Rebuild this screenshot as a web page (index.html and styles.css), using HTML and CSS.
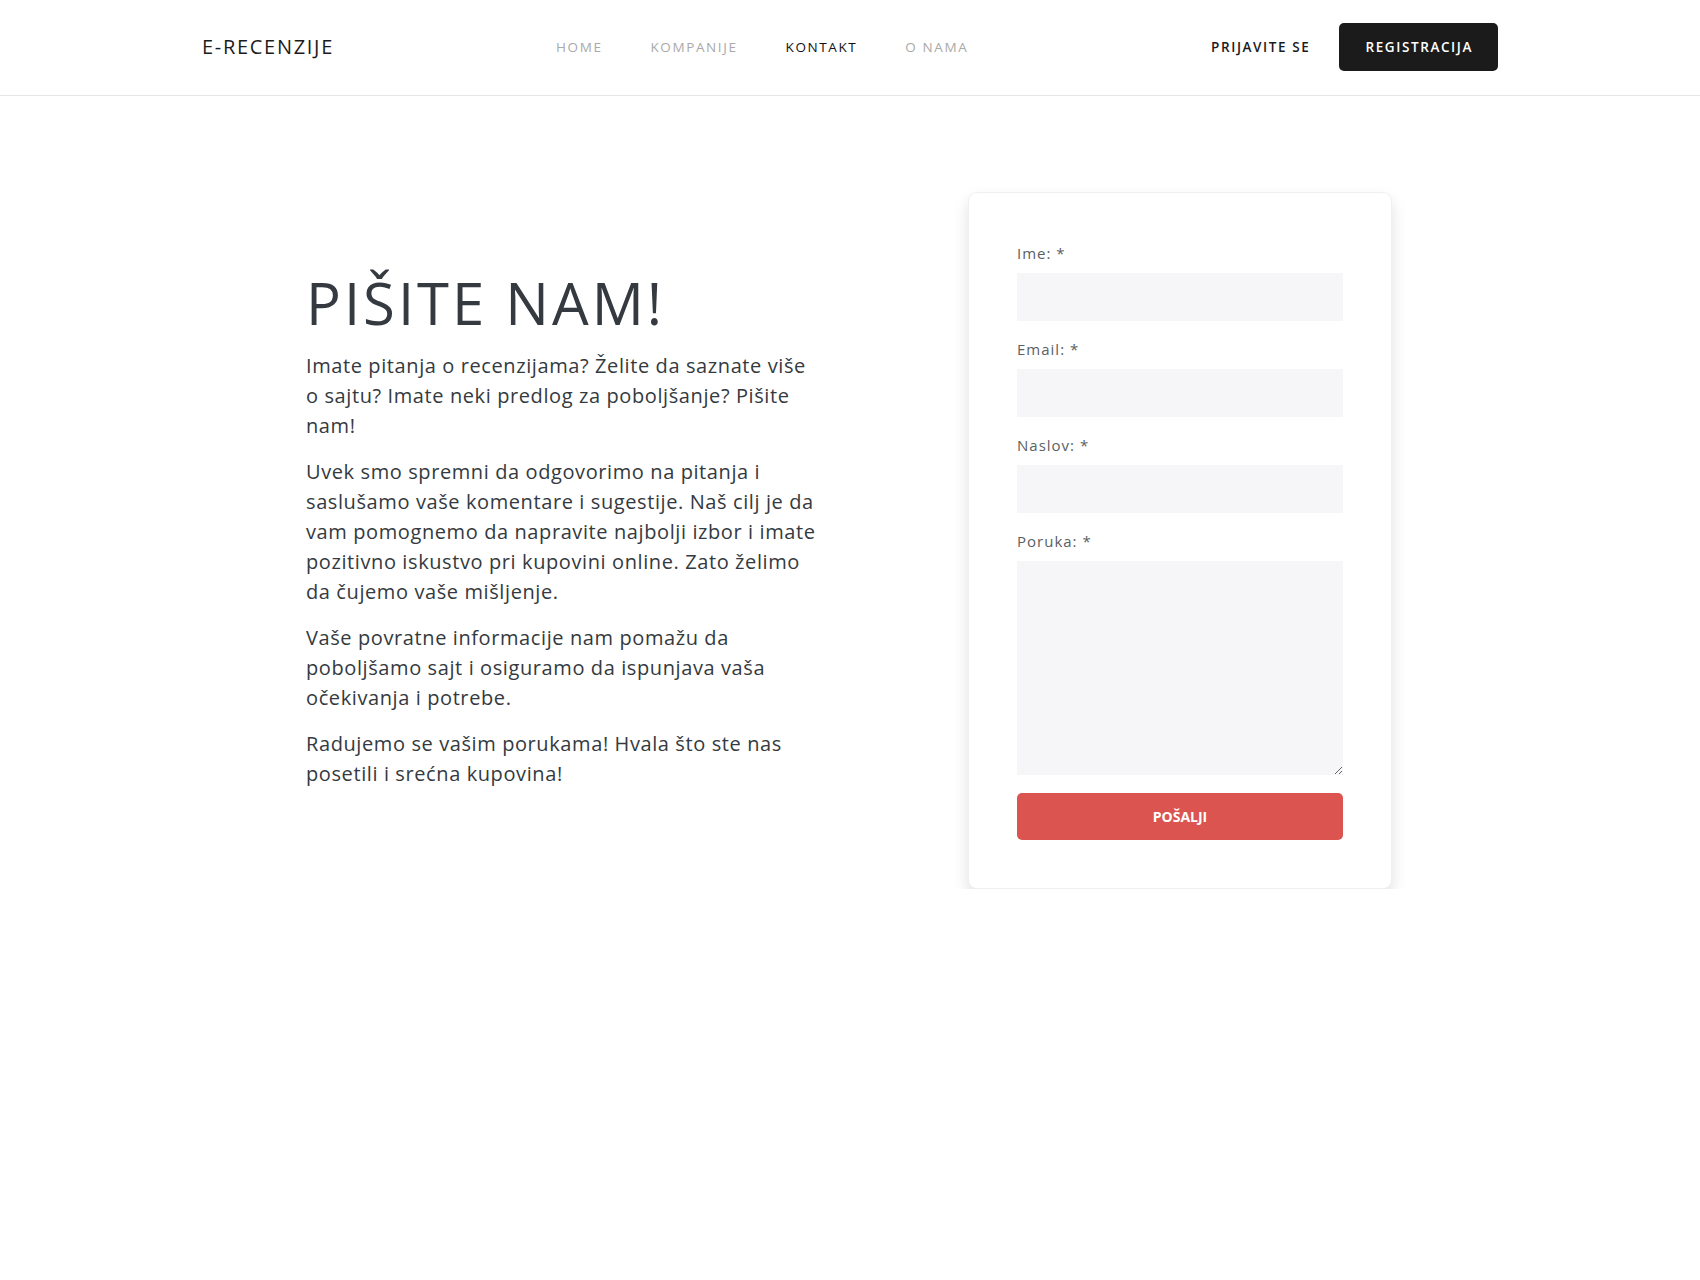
FILE: index.html
```html
<!DOCTYPE html>
<html lang="sr">
<head>
<meta charset="utf-8">
<title>E-Recenzije - Kontakt</title>
<link rel="stylesheet" href="styles.css">
</head>
<body>
<header class="site-header">
  <div class="container header-inner">
    <a class="logo" href="#">E-RECENZIJE</a>
    <nav class="main-nav">
      <a class="nav-link" href="#">HOME</a>
      <a class="nav-link" href="#">KOMPANIJE</a>
      <a class="nav-link active" href="#">KONTAKT</a>
      <a class="nav-link" href="#">O NAMA</a>
    </nav>
    <div class="auth">
      <a class="login" href="#">PRIJAVITE SE</a>
      <a class="register" href="#">REGISTRACIJA</a>
    </div>
  </div>
</header>
<main class="container contact">
  <section class="intro">
    <h1 class="title">PIŠITE NAM!</h1>
    <p class="lead">Imate pitanja o recenzijama? Želite da saznate više o sajtu? Imate neki predlog za poboljšanje? Pišite nam!</p>
    <p class="lead">Uvek smo spremni da odgovorimo na pitanja i saslušamo vaše komentare i sugestije. Naš cilj je da vam pomognemo da napravite najbolji izbor i imate pozitivno iskustvo pri kupovini online. Zato želimo da čujemo vaše mišljenje.</p>
    <p class="lead">Vaše povratne informacije nam pomažu da poboljšamo sajt i osiguramo da ispunjava vaša očekivanja i potrebe.</p>
    <p class="lead">Radujemo se vašim porukama! Hvala što ste nas posetili i srećna kupovina!</p>
  </section>
  <form class="card">
    <div class="field">
      <label for="ime">Ime: *</label>
      <input id="ime" type="text">
    </div>
    <div class="field">
      <label for="email">Email: *</label>
      <input id="email" type="email">
    </div>
    <div class="field">
      <label for="naslov">Naslov: *</label>
      <input id="naslov" type="text">
    </div>
    <div class="field">
      <label for="poruka">Poruka: *</label>
      <textarea id="poruka"></textarea>
    </div>
    <button class="send" type="button">POŠALJI</button>
  </form>
</main>
</body>
</html>
```
FILE: styles.css
```css
* { box-sizing: border-box; }
body {
  margin: 0;
  font-family: "Open Sans", "Noto Sans", sans-serif;
  color: #343a40;
  background: #fff;
}
a { text-decoration: none; }
.container {
  width: 1296px;
  margin: 0 auto;
}
.site-header {
  border-bottom: 1px solid #e6e6e6;
}
.header-inner {
  height: 95px;
  display: flex;
  align-items: center;
  padding-bottom: 2px;
}
.logo {
  font-size: 20px;
  letter-spacing: 1.7px;
  color: #1b1b1b;
  width: 132px;
  white-space: nowrap;
}
.main-nav {
  display: flex;
  gap: 48px;
  margin-left: 222px;
}
.nav-link {
  font-size: 13.5px;
  letter-spacing: 1.6px;
  color: #a9a9a9;
}
.nav-link.active { color: #111; }
.auth {
  margin-left: auto;
  display: flex;
  align-items: center;
  gap: 29px;
}
.login {
  font-size: 13.5px;
  font-weight: 600;
  letter-spacing: 1.6px;
  color: #1b1b1b;
}
.register {
  background: #1b1b1b;
  color: #fff;
  font-size: 13.5px;
  font-weight: 600;
  letter-spacing: 1.6px;
  height: 48px;
  padding: 0 25px 0 26px;
  border-radius: 5px;
  display: flex;
  align-items: center;
}
.contact {
  display: flex;
  align-items: center;
  padding-top: 96px;
}
.intro {
  width: 512px;
  margin-left: 104px;
  margin-top: -8px;
}
.title {
  font-size: 58px;
  font-weight: 400;
  letter-spacing: 3px;
  margin: 0 0 13px;
  line-height: 1.2;
}
.lead {
  font-size: 20px;
  line-height: 30px;
  letter-spacing: 0.6px;
  margin: 0 0 16px;
}
.card {
  width: 424px;
  margin-left: auto;
  margin-right: 106px;
  padding: 48px;
  background: #fff;
  border: 1px solid rgba(0,0,0,0.06);
  border-radius: 9px;
  box-shadow: 0 8px 16px rgba(0,0,0,0.12);
}
.field { margin-bottom: 16px; }
.field label {
  display: block;
  font-size: 15px;
  line-height: 24px;
  letter-spacing: 1px;
  color: #5b5f63;
  margin-bottom: 8px;
}
.field input,
.field textarea {
  display: block;
  width: 100%;
  height: 48px;
  border: 0;
  background: #f6f6f8;
  font: inherit;
}
.field textarea {
  height: 214px;
  resize: vertical;
}
.send {
  display: block;
  width: 100%;
  height: 47px;
  margin-top: 18px;
  border: 0;
  border-radius: 5px;
  background: #db5450;
  color: #fff;
  font-family: inherit;
  font-size: 14px;
  font-weight: 700;
}
```
